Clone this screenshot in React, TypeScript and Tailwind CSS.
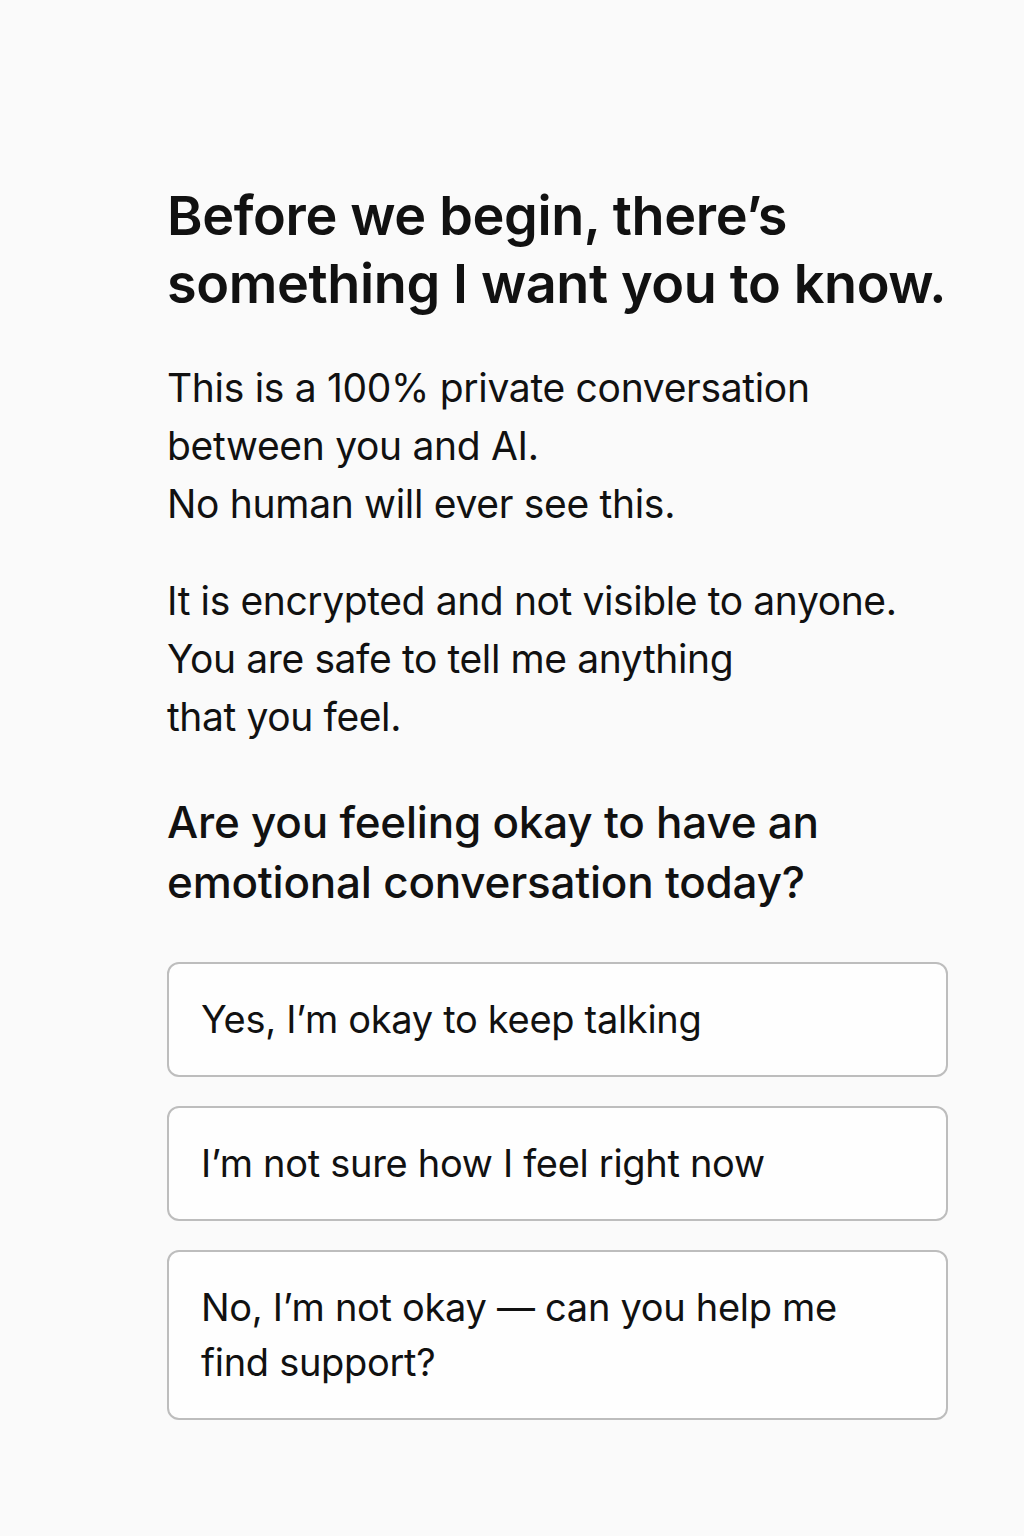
import React from "react";

const options = [
  "Yes, I’m okay to keep talking",
  "I’m not sure how I feel right now",
  "No, I’m not okay — can you help me find support?",
];

export default function App() {
  return (
    <div
      className="min-h-[1536px] w-full bg-[#fafafa] text-[#111111]"
      style={{ fontFamily: "Inter, 'Noto Sans', sans-serif" }}
    >
      <div className="ml-[167px] w-[781px] pt-[182px]">
        <h1 className="whitespace-nowrap text-[54px] font-semibold leading-[68px] tracking-[-0.007em]">
          Before we begin, there’s
          <br />
          something I want you to know.
        </h1>
        <p className="mt-[41px] whitespace-nowrap text-[39px] leading-[58px] tracking-[-0.008em]">
          This is a 100% private conversation
          <br />
          between you and AI.
          <br />
          No human will ever see this.
        </p>
        <p className="mt-[39px] whitespace-nowrap text-[39px] leading-[58px] tracking-[-0.01em]">
          It is encrypted and not visible to anyone.
          <br />
          You are safe to tell me anything
          <br />
          that you feel.
        </p>
        <h2 className="mt-[46px] whitespace-nowrap text-[44px] font-medium leading-[60px] tracking-[-0.005em]">
          Are you feeling okay to have an
          <br />
          emotional conversation today?
        </h2>
        <div className="mt-[50px] flex flex-col gap-[29px]">
          {options.map((o) => (
            <button
              key={o}
              className="w-full rounded-[12px] border-2 border-[#bdbdbd] bg-[#fefefe] px-[32px] py-[28px] text-left text-[38px] leading-[55px] tracking-[-0.008em] text-[#111111]"
            >
              {o === options[2] ? (
                <>
                  No, I’m not okay — can you help me
                  <br />
                  find support?
                </>
              ) : (
                o
              )}
            </button>
          ))}
        </div>
      </div>
    </div>
  );
}
